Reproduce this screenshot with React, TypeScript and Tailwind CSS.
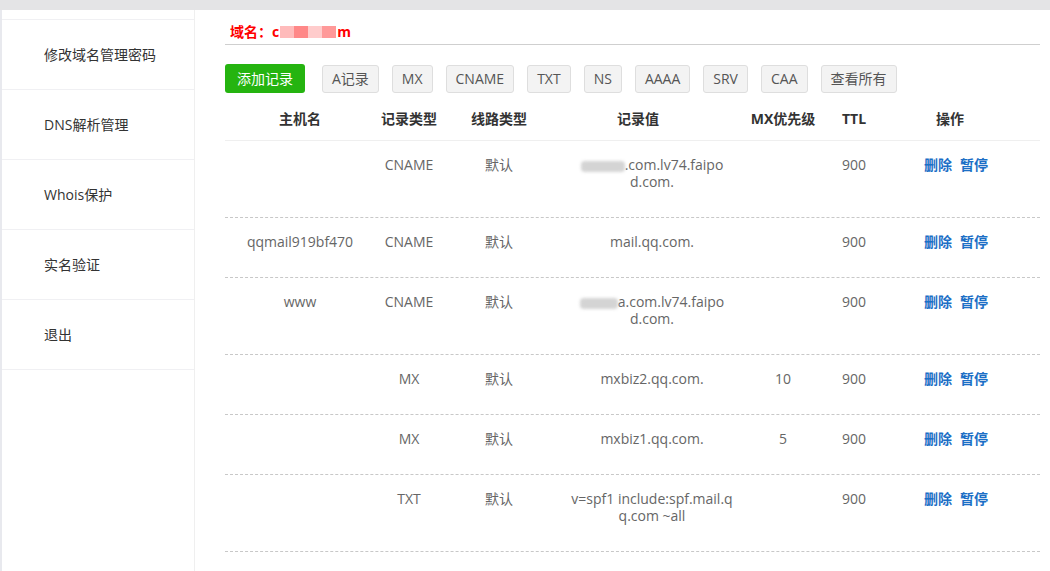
import React from "react";

interface RecordRow {
  id: number;
  host: string;
  type: string;
  line: string;
  value: React.ReactNode;
  mx: string;
  ttl: string;
}

const Blur: React.FC<{ w: number }> = ({ w }) => (
  <span
    className="inline-block h-[11px] align-middle bg-[#d4d4d4] blur-[1.5px] rounded-sm"
    style={{ width: w }}
  />
);

const records: RecordRow[] = [
  {
    id: 1,
    host: "",
    type: "CNAME",
    line: "默认",
    value: (
      <>
        <Blur w={44} />
        .com.lv74.faipo
        <br />
        d.com.
      </>
    ),
    mx: "",
    ttl: "900",
  },
  { id: 2, host: "qqmail919bf470", type: "CNAME", line: "默认", value: "mail.qq.com.", mx: "", ttl: "900" },
  {
    id: 3,
    host: "www",
    type: "CNAME",
    line: "默认",
    value: (
      <>
        <Blur w={38} />
        a.com.lv74.faipo
        <br />
        d.com.
      </>
    ),
    mx: "",
    ttl: "900",
  },
  { id: 4, host: "", type: "MX", line: "默认", value: "mxbiz2.qq.com.", mx: "10", ttl: "900" },
  { id: 5, host: "", type: "MX", line: "默认", value: "mxbiz1.qq.com.", mx: "5", ttl: "900" },
  {
    id: 6,
    host: "",
    type: "TXT",
    line: "默认",
    value: (
      <>
        v=spf1 include:spf.mail.q
        <br />
        q.com ~all
      </>
    ),
    mx: "",
    ttl: "900",
  },
];

const menu = ["修改域名管理密码", "DNS解析管理", "Whois保护", "实名验证", "退出"];
const filters = ["A记录", "MX", "CNAME", "TXT", "NS", "AAAA", "SRV", "CAA", "查看所有"];

const cols = "grid grid-cols-[150px_68px_112px_194px_68px_74px_1fr]";

const App: React.FC = () => {
  return (
    <div className="w-[1050px] h-[571px] overflow-hidden bg-white font-['Open_Sans','Noto_Sans_CJK_SC',sans-serif] text-[14px]">
      <div className="h-[10px] bg-[#e4e4e6]" />
      <div className="flex h-[561px]">
        {/* sidebar */}
        <aside className="w-[195px] shrink-0 border-l-2 border-l-[#e8e9ee] border-r border-r-[#efefef] pt-[9px]">
          <ul className="border-t border-[#f0f0f3]">
            {menu.map((m) => (
              <li
                key={m}
                className="h-[70px] flex items-center pl-[42px] border-b border-[#f0f0f3] text-[#333]"
              >
                {m}
              </li>
            ))}
          </ul>
        </aside>

        {/* main */}
        <main className="w-[815px] ml-[30px] pt-[14px]">
          <div className="border-b border-[#cfcfcf] pb-[3px] h-[21px] flex items-end">
            <span className="text-[#f00] font-bold leading-[18px] pl-[5px] flex items-center">
              域名：c
              <span className="inline-flex h-[12px] mx-[1px]">
                <span className="w-[14px] bg-[#fbb]" />
                <span className="w-[14px] bg-[#f88]" />
                <span className="w-[14px] bg-[#fcc]" />
                <span className="w-[14px] bg-[#f99]" />
              </span>
              m
            </span>
          </div>

          <div className="flex items-center gap-[13px] mt-[19px]">
            <button className="h-[29px] px-[12px] rounded-[3px] bg-[#25b410] text-white mr-[4px]">
              添加记录
            </button>
            {filters.map((f) => (
              <button
                key={f}
                className="h-[28px] px-[9px] rounded-[3px] bg-[#f3f3f3] border border-[#dedede] text-[#555]"
              >
                {f}
              </button>
            ))}
          </div>

          {/* table header */}
          <div className={`${cols} h-[48px] pt-[17px] leading-[18px] font-bold text-[#333] text-center border-b border-[#efefef]`}>
            <div>主机名</div>
            <div>记录类型</div>
            <div>线路类型</div>
            <div className="pr-[28px]">记录值</div>
            <div>MX优先级</div>
            <div>TTL</div>
            <div className="text-left pl-[45px]">操作</div>
          </div>

          {records.map((r) => (
            <div
              key={r.id}
              className={`${cols} pt-[15px] pb-[27px] leading-[17px] text-[#666] text-center border-b border-dashed border-[#c8c8c8]`}
            >
              <div>{r.host}</div>
              <div>{r.type}</div>
              <div>{r.line}</div>
              <div>{r.value}</div>
              <div>{r.mx}</div>
              <div>{r.ttl}</div>
              <div className="text-left pl-[33px] font-bold text-[#1c6fc6] flex gap-[8px] h-[17px] items-center">
                <span>删除</span>
                <span>暂停</span>
              </div>
            </div>
          ))}
        </main>
      </div>
    </div>
  );
};

export default App;
